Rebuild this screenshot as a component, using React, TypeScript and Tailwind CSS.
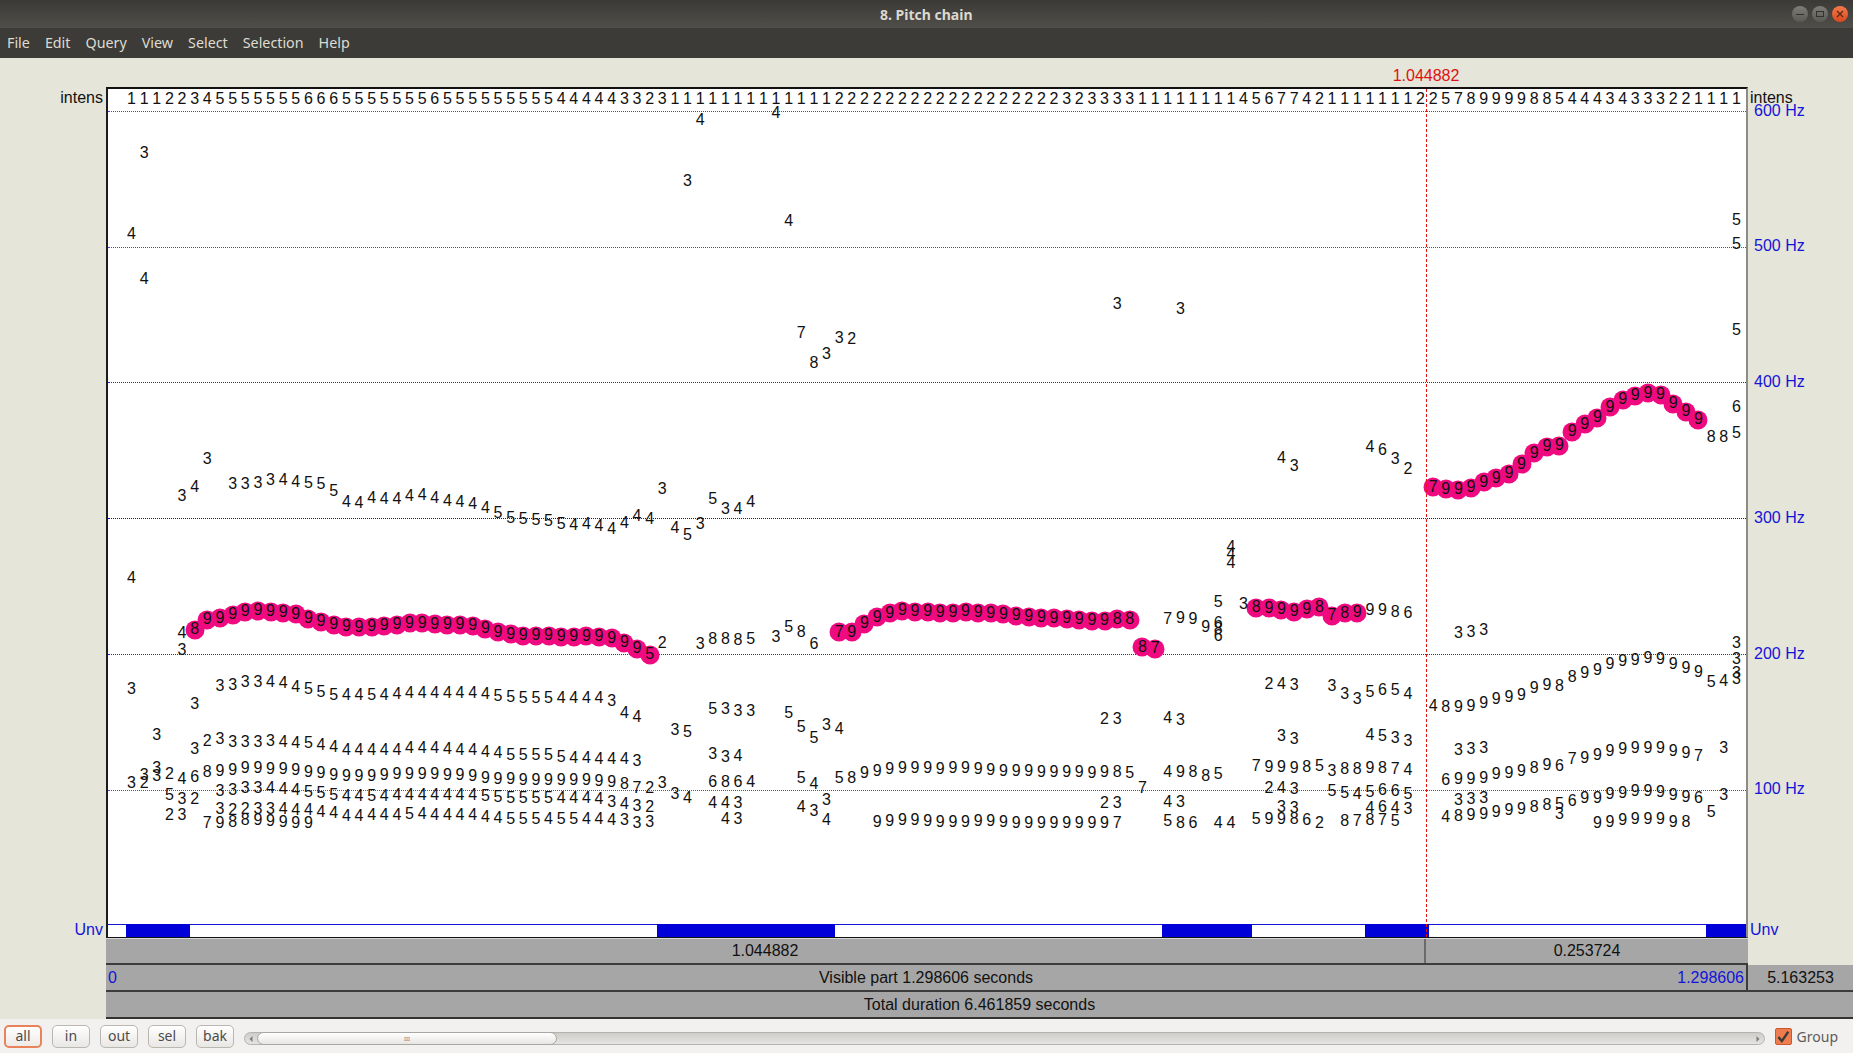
import type { ReactNode } from 'react'

// [first frame column, digits, centre y of each digit (one number = flat row)]
type Track = [number, string, number | number[]]

const COL_X = 23.5
const COL_W = 12.637

const toLeft = (col: number) => COL_X + COL_W * col
// values below were read off the plot in 1/3 px from y=440
const toTop = (z: number) => 440 + z / 3 - 88

const pink: Track[] = [
  [5, '8' + '9'.repeat(35) + '5', [565, 535, 530, 520, 510, 508, 510, 513, 518, 532, 540, 550, 555, 557, 555, 553, 550, 545, 545, 548, 550, 550, 553, 562, 572, 578, 582, 583, 583, 585, 585, 584, 585, 590, 603, 622, 640]],
  [56, '79' + '9'.repeat(20) + '88', [572, 572, 547, 527, 515, 508, 510, 510, 513, 513, 510, 513, 515, 518, 522, 525, 528, 530, 532, 535, 537, 537, 533, 535]],
  [80, '87', [617, 622]],
  [89, '899998789', [498, 500, 505, 510, 503, 497, 522, 515, 513]],
  [103, '7' + '9'.repeat(21), [137, 143, 145, 138, 122, 110, 97, 68, 35, 15, 13, -30, -52, -72, -103, -125, -137, -145, -140, -113, -90, -65]],
]

const plain: Track[] = [
  // intensity row along the top
  [0, '111223455555556665555555655555555544444', -1026],
  [39, '3323' + '1'.repeat(13) + '2'.repeat(18) + '323333' + '1'.repeat(8), -1026],
  [88, '4567742111111122578999988544434333221111', -1026],

  // far candidates up high
  [1, '3', -864], [0, '4', -621], [1, '4', -486],
  [45, '4', -963], [51, '4', -984], [44, '3', -780], [52, '4', -660],
  [53, '7', -324], [54, '8', -234], [55, '3', -261], [56, '3', -309], [57, '2', -306],
  [78, '3', -411], [83, '3', -396],
  [127, '5', -662], [127, '5', -590], [127, '5', -332], [127, '6', -103], [127, '5', -23],
  [125, '88', -12],

  // around 300 Hz
  [6, '3', 55], [4, '3', 165], [5, '4', 138],
  [8, '333344' + '555' + '4'.repeat(12) + '555555' + '4444', [130, 130, 125, 118, 118, 122, 125, 130, 150, 182, 185, 172, 175, 175, 165, 163, 170, 180, 183, 190, 202, 215, 230, 235, 238, 240, 250, 253, 250, 255, 265]],
  [39, '444', [247, 226, 235]],
  [42, '3', 145], [43, '453', [262, 283, 250]], [46, '5344', [175, 203, 205, 183]],
  [91, '43', [52, 75]], [98, '4632', [18, 28, 55, 85]],

  // around 200 Hz
  [0, '4', 412], [4, '4', 575], [4, '3', 628], [42, '2', 605],
  [45, '38885', [610, 593, 593, 597, 593]],
  [51, '3586', [587, 558, 573, 608]],
  [82, '799', [535, 530, 533]], [85, '9', 557],
  [86, '5', 483], [86, '6', 545], [86, '8', 565], [86, '6', 585],
  [87, '4', 318], [87, '4', 340], [87, '4', 365],
  [88, '3', 490],
  [98, '9986', [507, 507, 513, 517]],
  [105, '333', [575, 572, 568]],

  // second band
  [0, '3', 745], [5, '3', 790],
  [7, '33334445554454444444445555544443', [735, 733, 723, 722, 723, 727, 737, 745, 753, 762, 762, 762, 762, 762, 760, 757, 757, 757, 757, 757, 757, 760, 765, 768, 770, 770, 772, 772, 772, 772, 772, 780]],
  [39, '44', [817, 827]],
  [43, '35', [868, 873]], [46, '5333', [805, 805, 810, 810]],
  [52, '55534', [817, 858, 890, 852, 863]],
  [77, '23', 835], [82, '43', [830, 838]],
  [90, '243', [730, 730, 733]], [95, '3335654', [735, 760, 773, 752, 748, 747, 760]],
  [103, '48' + '9'.repeat(8) + '88' + '9'.repeat(10) + '543', [795, 798, 797, 795, 787, 775, 768, 762, 742, 733, 735, 708, 695, 687, 670, 660, 657, 652, 655, 670, 682, 692, 722, 720, 715]],
  [127, '3', 607], [127, '3', 655], [127, '3', 695],

  // third band
  [2, '3', 882], [5, '3', 925],
  [6, '2' + '33333' + '44' + '5' + '44' + '4'.repeat(13) + '55555' + '44444', [900, 895, 903, 903, 902, 900, 902, 905, 907, 913, 917, 928, 928, 927, 927, 927, 920, 920, 920, 925, 927, 928, 932, 936, 942, 942, 942, 943, 947, 950, 952, 953, 955, 955]],
  [40, '3', 960],
  [46, '334', [940, 947, 945]],
  [91, '33', [885, 893]], [98, '4533', [883, 885, 890, 900]],
  [105, '333', [927, 923, 922]], [126, '3', 920],

  // just above 100 Hz
  [2, '3', 980], [1, '3', 1003], [2, '3', 1005], [3, '246', [1000, 1013, 1008]],
  [6, '8' + '9'.repeat(32) + '87', [992, 990, 988, 980, 980, 983, 985, 988, 992, 997, 1002, 1005, 1005, 1005, 1003, 1000, 1000, 1000, 1000, 1002, 1002, 1005, 1010, 1013, 1015, 1018, 1018, 1018, 1018, 1018, 1018, 1020, 1022, 1030, 1040]],
  [41, '2334', [1040, 1025, 1060, 1072]],
  [0, '32', [1027, 1025]],
  [46, '6864', [1023, 1023, 1023, 1022]],
  [53, '54', [1012, 1030]],
  [56, '58' + '9'.repeat(20) + '85', [1012, 1012, 997, 990, 985, 980, 982, 982, 985, 982, 982, 985, 987, 990, 990, 990, 992, 993, 993, 993, 995, 993, 992, 997]],
  [80, '7', 1040],
  [82, '49885', [992, 992, 993, 1005, 1000]],
  [89, '7999853889874', [975, 978, 978, 980, 978, 975, 990, 985, 985, 982, 982, 985, 987]],
  [104, '6999999' + '8967' + '9'.repeat(9), [1017, 1015, 1015, 1010, 1000, 995, 990, 982, 972, 975, 955, 950, 943, 930, 925, 920, 920, 922, 930, 935]],
  [124, '7', 945],

  // below 100 Hz
  [3, '532', [1062, 1073, 1075]],
  [7, '3333' + '444' + '555' + '44' + '5' + '4'.repeat(8) + '555555' + '4444' + '3', [1050, 1048, 1042, 1040, 1040, 1045, 1048, 1053, 1056, 1062, 1064, 1065, 1065, 1065, 1063, 1062, 1062, 1062, 1062, 1062, 1062, 1065, 1068, 1070, 1070, 1070, 1072, 1072, 1072, 1072, 1075, 1083]],
  [39, '432', [1090, 1095, 1098]],
  [46, '443', 1085], [53, '433', [1098, 1110, 1078]],
  [77, '23', 1085], [82, '43', 1083],
  [90, '243', [1042, 1042, 1045]], [95, '5545665', [1050, 1055, 1060, 1052, 1048, 1050, 1058]],
  [105, '333', [1078, 1075, 1072]],
  [91, '33', [1098, 1102]], [98, '4643', [1100, 1097, 1100, 1103]],
  [104, '4899999885', [1127, 1125, 1122, 1120, 1112, 1107, 1105, 1098, 1093, 1090]],
  [113, '3', 1118],
  [114, '69999999996', [1080, 1072, 1070, 1060, 1055, 1050, 1050, 1052, 1062, 1067, 1072]],
  [126, '3', 1062], [125, '5', 1112],

  // bottom band
  [3, '23', 1122],
  [7, '32233' + '4'.repeat(10) + '5' + '4'.repeat(7) + '555' + '4' + '55' + '444' + '3', [1105, 1107, 1103, 1105, 1105, 1105, 1108, 1108, 1112, 1115, 1125, 1125, 1123, 1123, 1123, 1120, 1118, 1122, 1122, 1123, 1123, 1128, 1130, 1133, 1133, 1133, 1133, 1135, 1135, 1135, 1135, 1137, 1137]],
  [40, '33', [1145, 1142]],
  [6, '798899999', [1147, 1147, 1143, 1138, 1138, 1140, 1142, 1145, 1147]],
  [47, '43', 1135], [55, '4', 1138],
  [59, '9'.repeat(19) + '7', [1142, 1140, 1137, 1137, 1140, 1142, 1143, 1143, 1140, 1140, 1143, 1145, 1145, 1147, 1147, 1147, 1147, 1147, 1147, 1147]],
  [82, '586', [1140, 1147, 1147]], [86, '44', [1147, 1145]],
  [89, '599862', [1135, 1135, 1135, 1135, 1137, 1147]],
  [96, '87875', [1140, 1140, 1137, 1137, 1140]],
  [116, '99999998', [1145, 1142, 1138, 1133, 1133, 1133, 1142, 1143]],
]

const hzLabels: [string, number][] = [
  ['600 Hz', 111],
  ['500 Hz', 246],
  ['400 Hz', 382],
  ['300 Hz', 518],
  ['200 Hz', 654],
  ['100 Hz', 789],
]

const gridLines: [number, string][] = [
  [111, 'border-[#4444f0]'],
  [247, 'border-[#4444f0]'],
  [382, 'border-[#2222ee]'],
  [518, 'border-[#0808ee]'],
  [654, 'border-[#2222ee]'],
  [790, 'border-[#4444f0]'],
]

const unvoiced: [number, number][] = [
  [126, 190],
  [657, 835],
  [1162, 1252],
  [1365, 1429],
  [1706, 1746],
]

function expand(t: Track) {
  const [start, digits, ys] = t
  return digits.split('').map((d, i) => ({
    d,
    col: start + i,
    z: Array.isArray(ys) ? ys[Math.min(i, ys.length - 1)] : ys,
  }))
}

function Digits({ tracks }: { tracks: Track[] }) {
  return (
    <>
      {tracks.flatMap((t, ti) =>
        expand(t).map(({ d, col, z }) => (
          <span
            key={`${ti}-${col}`}
            className="absolute -translate-x-1/2 -translate-y-1/2 text-[16px] leading-none text-[#111]"
            style={{ left: toLeft(col), top: toTop(z) }}
          >
            {d}
          </span>
        )),
      )}
    </>
  )
}

function Dots({ tracks }: { tracks: Track[] }) {
  return (
    <>
      {tracks.flatMap((t, ti) =>
        expand(t).map(({ col, z }) => (
          <span
            key={`${ti}-${col}`}
            className="absolute h-[19px] w-[19px] -translate-x-1/2 -translate-y-1/2 rounded-full bg-[#f00a80]"
            style={{ left: toLeft(col), top: toTop(z) + 0.5 }}
          />
        )),
      )}
    </>
  )
}

function ToolButton({ children, active }: { children: ReactNode; active?: boolean }) {
  return (
    <button
      className={
        active
          ? 'flex h-[23px] w-[38px] items-center justify-center rounded-[5px] border-2 border-[#e8835c] bg-gradient-to-b from-white to-[#eeebe8] pb-0.5 text-[14px] text-[#4c4c4c]'
          : 'flex h-[23px] w-[38px] items-center justify-center rounded-[5px] border border-[#b9b7b2] bg-gradient-to-b from-white to-[#e9e7e4] pb-0.5 text-[14px] text-[#4c4c4c]'
      }
    >
      {children}
    </button>
  )
}

export default function App() {
  return (
    <div className="flex h-[1053px] w-[1853px] flex-col overflow-hidden bg-[#e5e5d9] font-['Liberation_Sans',sans-serif]">
      {/* title bar */}
      <div className="flex h-7 items-center justify-between bg-gradient-to-b from-[#3b3a36] to-[#4f4e49] pl-[880px] pr-[5px]">
        <span className="font-['Noto_Sans',sans-serif] text-[14px] font-bold text-[#dcd8cf]">8. Pitch chain</span>
        <div className="flex items-center gap-1">
          <span className="flex h-4 w-4 items-center justify-center rounded-full bg-gradient-to-b from-[#7d7c77] to-[#5a5954]">
            <span className="h-px w-2 bg-[#33322f]" />
          </span>
          <span className="flex h-4 w-4 items-center justify-center rounded-full bg-gradient-to-b from-[#7d7c77] to-[#5a5954]">
            <span className="h-[6px] w-2 border border-[#33322f]" />
          </span>
          <span className="flex h-4 w-4 items-center justify-center rounded-full bg-gradient-to-b from-[#f47a4a] to-[#d9481c]">
            <svg viewBox="0 0 8 8" className="h-2 w-2">
              <path d="M1 1l6 6M7 1l-6 6" stroke="#5a2a14" strokeWidth="1.4" />
            </svg>
          </span>
        </div>
      </div>

      {/* menu bar */}
      <div className="flex h-[30px] items-center gap-[15px] bg-[#3c3b37] px-[7px] font-['Noto_Sans',sans-serif] text-[14.3px] text-[#dfdbd2]">
        <span>File</span>
        <span>Edit</span>
        <span>Query</span>
        <span>View</span>
        <span>Select</span>
        <span>Selection</span>
        <span>Help</span>
      </div>

      {/* editor area */}
      <div className="relative flex-1 pt-[29px]">
        <span className="absolute left-[1426px] top-[10px] -translate-x-1/2 text-[16px] leading-none text-[#e01010]">1.044882</span>

        <div className="flex h-[851px]">
          <div className="flex w-[106px] flex-col items-end justify-between pr-[3px] text-[16px]">
            <span className="leading-[22px] text-[#111]">intens</span>
            <span className="leading-[16px] text-[#1414d8]">Unv</span>
          </div>

          <div className="relative w-[1642px] overflow-hidden border-l-2 border-r-2 border-t-2 border-b border-l-[#1c1c1c] border-r-[#8c8c88] border-t-[#111] border-b-[#111] bg-white">
            {gridLines.map(([y, color]) => (
              <div key={y} className={`absolute left-0 right-0 border-t border-dotted ${color}`} style={{ top: y - 89 }} />
            ))}
            <Dots tracks={pink} />
            <Digits tracks={plain} />
            <Digits tracks={pink} />
            <div className="absolute bottom-[12px] left-0 right-0 border-t border-[#1414d8]" />
            {unvoiced.map(([a, b]) => (
              <div key={a} className="absolute bottom-0 h-[13px] bg-[#0000d8]" style={{ left: a - 108, width: b - a }} />
            ))}
            <div className="absolute bottom-0 left-[1318px] top-0 border-l border-dashed border-[#e81010]" />
          </div>

          <div className="relative w-[105px]">
            <span className="absolute left-[2px] top-0 text-[16px] leading-[22px] text-[#111]">intens</span>
            {hzLabels.map(([label, y]) => (
              <span key={label} className="absolute left-[6px] -translate-y-1/2 text-[16px] leading-none text-[#1414d8]" style={{ top: y - 87 }}>
                {label}
              </span>
            ))}
            <span className="absolute bottom-0 left-[2px] text-[16px] leading-[16px] text-[#1414d8]">Unv</span>
          </div>
        </div>

        {/* time bars */}
        <div className="ml-[106px] flex h-[27px] w-[1642px] border-b-2 border-t border-b-[#3c3c3c] border-t-[#d8d8d8] bg-[#a6a6a6] text-[16px] text-[#111]">
          <div className="flex w-[1320px] items-center justify-center border-r-2 border-[#6a6a6a]">1.044882</div>
          <div className="flex flex-1 items-center justify-center">0.253724</div>
        </div>
        <div className="ml-[106px] flex h-[27px] border-b-2 border-b-[#3c3c3c] bg-[#a6a6a6] text-[16px] text-[#111]">
          <div className="grid w-[1642px] grid-cols-[1fr_auto_1fr] items-center border-r-2 border-[#3c3c3c] px-[2px]">
            <span className="text-[#1414d8]">0</span>
            <span>Visible part 1.298606 seconds</span>
            <span className="text-right text-[#1414d8]">1.298606</span>
          </div>
          <div className="flex flex-1 items-center justify-center">5.163253</div>
        </div>
        <div className="ml-[106px] flex h-[27px] items-center justify-center border-b-2 border-b-[#333] bg-[#a6a6a6] text-[16px] text-[#111]">
          Total duration 6.461859 seconds
        </div>

        {/* bottom toolbar */}
        <div className="flex h-[34px] items-center bg-[#f2f1ef] pl-1 pr-[15px] pt-px font-['Noto_Sans',sans-serif]">
          <div className="flex gap-[10px]">
            <ToolButton active>all</ToolButton>
            <ToolButton>in</ToolButton>
            <ToolButton>out</ToolButton>
            <ToolButton>sel</ToolButton>
            <ToolButton>bak</ToolButton>
          </div>
          <div className="relative ml-[10px] mt-[4px] flex h-[13px] w-[1521px] items-center justify-between rounded-full border border-[#b5b3ae] bg-gradient-to-b from-[#cfcdca] to-[#e6e4e1] px-[3px]">
            <svg viewBox="0 0 6 8" className="h-2 w-[6px]"><path d="M4.5 1L1.5 4l3 3z" fill="#7c7c7c" /></svg>
            <svg viewBox="0 0 6 8" className="h-2 w-[6px]"><path d="M1.5 1l3 3-3 3z" fill="#7c7c7c" /></svg>
            <div className="absolute left-[12px] top-[-1px] flex h-[13px] w-[300px] items-center justify-center rounded-full border border-[#a9a7a2] bg-gradient-to-b from-white to-[#e8e6e3]">
              <span className="text-[6px] leading-none text-[#777]">III</span>
            </div>
          </div>
          <div className="ml-auto flex items-center gap-[5px] text-[14px] text-[#5c5c5c]">
            <span className="flex h-[17px] w-[17px] items-center justify-center rounded-[2px] border border-[#c9582d] bg-[#ee7c4e]">
              <svg viewBox="0 0 12 12" className="h-[14px] w-[14px]">
                <path d="M2 6l3 3.5L10.5 1.5" stroke="#3c3b37" strokeWidth="2" fill="none" />
              </svg>
            </span>
            <span>Group</span>
          </div>
        </div>
      </div>
    </div>
  )
}
